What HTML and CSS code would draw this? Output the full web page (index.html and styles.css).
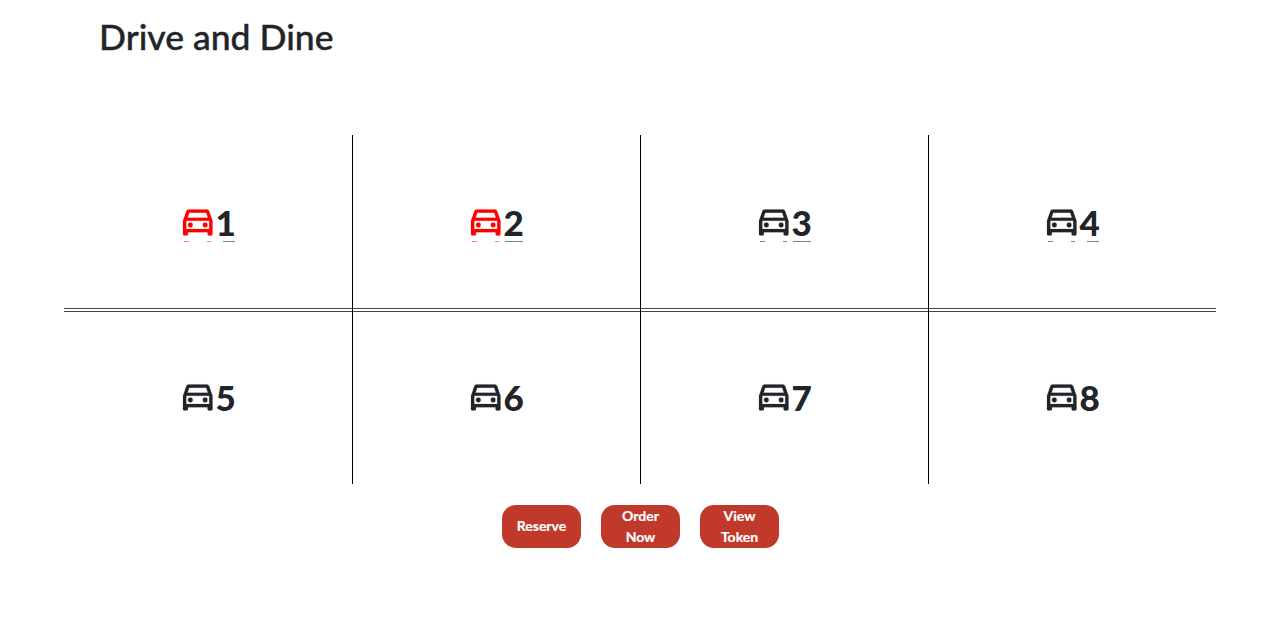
FILE: index.html
```html
<!DOCTYPE html>
<html lang="en">
<head>
<meta charset="utf-8">
<title>Drive and Dine</title>
<link rel="stylesheet" href="styles.css">
</head>
<body>
<svg class="defs" width="0" height="0" aria-hidden="true">
  <symbol id="car" viewBox="3 5 18 16" overflow="visible">
    <path d="M18.92 6.01C18.72 5.42 18.16 5 17.5 5h-11c-.66 0-1.21.42-1.42 1.01L3 12v8c0 .55.45 1 1 1h1c.55 0 1-.45 1-1v-1h12v1c0 .55.45 1 1 1h1c.55 0 1-.45 1-1v-8l-2.08-5.99zM6.85 7h10.29l1.08 3.11H5.77L6.85 7zM19 17H5v-5h14v5z"/>
    <circle cx="7.5" cy="14.5" r="1.5"/>
    <circle cx="16.5" cy="14.5" r="1.5"/>
  </symbol>
</svg>
<header class="header"><h1 class="title">Drive and Dine</h1></header>
<main class="lot">
  <div class="slot slot-top slot-taken"><span class="icon"><svg class="car"><use href="#car"/></svg></span><span class="num num-narrow">1</span></div>
  <div class="slot slot-top slot-taken"><span class="icon"><svg class="car"><use href="#car"/></svg></span><span class="num">2</span></div>
  <div class="slot slot-top"><span class="icon"><svg class="car"><use href="#car"/></svg></span><span class="num">3</span></div>
  <div class="slot slot-top"><span class="icon"><svg class="car"><use href="#car"/></svg></span><span class="num num-narrow">4</span></div>
  <div class="slot slot-bottom"><span class="icon"><svg class="car"><use href="#car"/></svg></span><span class="num">5</span></div>
  <div class="slot slot-bottom"><span class="icon"><svg class="car"><use href="#car"/></svg></span><span class="num">6</span></div>
  <div class="slot slot-bottom"><span class="icon"><svg class="car"><use href="#car"/></svg></span><span class="num">7</span></div>
  <div class="slot slot-bottom"><span class="icon"><svg class="car"><use href="#car"/></svg></span><span class="num">8</span></div>
</main>
<nav class="actions">
  <button class="btn">Reserve</button>
  <button class="btn">Order Now</button>
  <button class="btn">View Token</button>
</nav>
</body>
</html>
```
FILE: styles.css
```css
* { box-sizing: border-box; }
html, body { margin: 0; padding: 0; background: #fff; }
body { height: 621px; overflow: hidden; font-family: "Lato", sans-serif; color: #212529; }
.defs { display: block; height: 0; }
.header { height: 135px; padding: 15px 0 0 99px; }
.title { margin: 0; font-family: "Lato", sans-serif; font-size: 35.5px; font-weight: 500; line-height: 44px; color: #212529; -webkit-text-stroke: .4px #212529; }
.lot { display: grid; grid-template-columns: repeat(4, 288px); grid-template-rows: 177px 172px; width: 1152px; margin: 0 auto; }
.slot { position: relative; display: flex; justify-content: center; gap: 3px; padding-left: 3px; }
.slot + .slot::before { content: ""; position: absolute; left: 0; top: 0; bottom: 0; width: 1px; background: #000; }
.slot:nth-child(5)::before { display: none; }
.slot-top { border-bottom: 4px double #444; padding-top: 74px; }
.slot-top::before { bottom: -4px !important; }
.slot-bottom { padding-top: 72px; }
.icon { position: relative; display: block; width: 29.5px; height: 27px; }
.car { display: block; width: 29.5px; height: 27px; overflow: visible; fill: #212529; stroke: #212529; stroke-width: .1; }
.slot-taken .car { fill: #f00; stroke: #f00; }
.slot-taken .icon { color: #f00; }
.num { position: relative; display: block; height: 27px; font-size: 35px; font-weight: 900; line-height: 27px; }
.slot-top .icon::after { content: ""; position: absolute; left: 1px; top: 32px; width: 27px; height: 1px; opacity: .55; background: linear-gradient(90deg, currentColor 0 5px, transparent 5px 23px, currentColor 23px); }
.slot-top .num::after { content: ""; position: absolute; left: 1px; right: 1px; top: 32px; height: 1px; background: #212529; opacity: .6; }
.slot-top .num-narrow::after { left: 7px; }
.actions { display: flex; justify-content: center; gap: 20.5px; margin-top: 21px; padding-left: 1px; }
.btn { width: 78.5px; height: 43px; padding: 0 8px 2px; border: 0; border-radius: 14px; background: #c0392b; color: #fff; font-family: "Lato", sans-serif; font-size: 14px; font-weight: 700; line-height: 21px; -webkit-text-stroke: .2px #fff; }
```
